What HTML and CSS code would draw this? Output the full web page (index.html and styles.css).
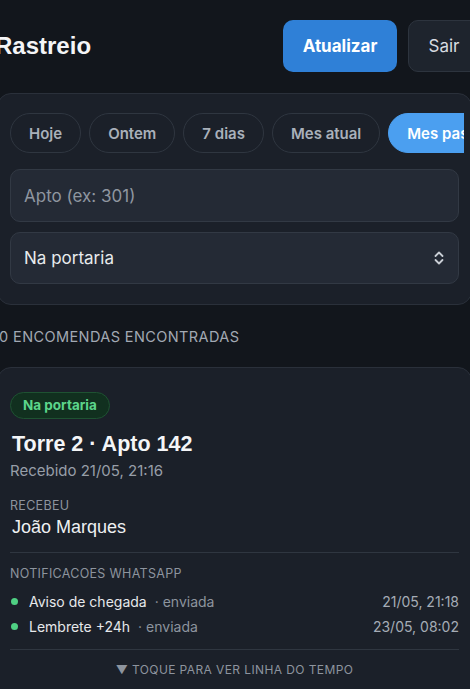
FILE: index.html
```html
<!DOCTYPE html>
<html lang="pt-BR">
<head>
    <meta charset="UTF-8">
    <meta name="viewport" content="width=device-width, initial-scale=1.0">
    <title>Rastreio</title>
    <link rel="stylesheet" href="styles.css">
</head>
<body>
    <div class="app">
        <header class="top">
            <h1>Rastreio</h1>
            <div class="actions">
                <button class="btn-primary">Atualizar</button>
                <button class="btn-ghost">Sair</button>
            </div>
        </header>

        <section class="filters">
            <div class="chips">
                <button class="chip">Hoje</button>
                <button class="chip">Ontem</button>
                <button class="chip">7 dias</button>
                <button class="chip">Mes atual</button>
                <button class="chip active">Mes passado</button>
            </div>
            <input class="field" type="text" placeholder="Apto (ex: 301)">
            <div class="select">
                <span>Na portaria</span>
                <svg width="12" height="16" viewBox="0 0 12 16" fill="none" stroke="#c9ced5" stroke-width="1.8" stroke-linecap="round" stroke-linejoin="round">
                    <path d="M2.5 6 6 2.5 9.5 6"/>
                    <path d="M2.5 10 6 13.5 9.5 10"/>
                </svg>
            </div>
        </section>

        <p class="count">0 ENCOMENDAS ENCONTRADAS</p>

        <article class="card">
            <span class="badge">Na portaria</span>
            <h2>Torre 2 · Apto 142</h2>
            <p class="muted">Recebido 21/05, 21:16</p>

            <p class="label first">RECEBEU</p>
            <p class="person">João Marques</p>

            <hr>

            <p class="label">NOTIFICACOES WHATSAPP</p>
            <ul class="notes">
                <li>
                    <span class="dot"></span>
                    <span class="name">Aviso de chegada</span>
                    <span class="state">· enviada</span>
                    <span class="when">21/05, 21:18</span>
                </li>
                <li>
                    <span class="dot"></span>
                    <span class="name">Lembrete +24h</span>
                    <span class="state">· enviada</span>
                    <span class="when">23/05, 08:02</span>
                </li>
            </ul>

            <hr class="last">

            <p class="toggle">▼ TOQUE PARA VER LINHA DO TEMPO</p>
        </article>
    </div>
</body>
</html>
```

FILE: styles.css
```css
html {
    overflow-x: hidden;
}
body {
    margin: 0;
    background-color: #12161c;
    color: #e6e8eb;
    font-family: Inter, "Noto Sans", sans-serif;
}
.app {
    margin: 0 -2px 0 -3px;
}
p {
    margin: 0;
}

/* header */
.top {
    display: flex;
    justify-content: space-between;
    align-items: center;
    padding-top: 20px;
}
.top h1 {
    margin: 0 0 0 -2px;
    font-family: "Liberation Sans", Arial, sans-serif;
    font-size: 24px;
    font-weight: bold;
    color: #f4f5f7;
}
.actions {
    display: flex;
    gap: 11px;
    margin-right: -8px;
}
.actions button {
    height: 52px;
    border-radius: 10px;
    font-family: Inter, sans-serif;
    font-size: 17px;
    cursor: pointer;
}
.btn-primary {
    width: 114px;
    background-color: #2f80d7;
    color: #fff;
    border: none;
    font-weight: 700;
}
.btn-ghost {
    width: 72px;
    background-color: #1e242d;
    color: #d7dbe0;
    border: 1px solid #2d343e;
    font-weight: 400;
}

/* filter panel */
.filters {
    margin-top: 21px;
    padding: 19px 12px 20px;
    background-color: #1b2029;
    border: 1px solid #2a303a;
    border-radius: 14px;
    display: flex;
    flex-direction: column;
}
.chips {
    display: flex;
    gap: 8px;
    overflow: hidden;
    margin-right: -5px;
}
.chip {
    flex: none;
    height: 40px;
    padding: 0 18px;
    border-radius: 20px;
    border: 1px solid #2f3640;
    background-color: transparent;
    color: #a9b0ba;
    font-family: Inter, sans-serif;
    font-size: 15px;
    font-weight: 600;
}
.chip.active {
    background-color: #4b9ff0;
    border-color: #4b9ff0;
    color: #fff;
}
.field {
    margin-top: 16px;
    height: 53px;
    box-sizing: border-box;
    padding: 0 13px;
    background-color: #242a35;
    border: 1px solid #323944;
    border-radius: 10px;
    font-family: Inter, sans-serif;
    font-size: 17px;
    color: #e6e8eb;
}
.field::placeholder {
    color: #8f96a0;
}
.select {
    margin-top: 10px;
    height: 52px;
    box-sizing: border-box;
    padding: 0 13px;
    background-color: #242a35;
    border: 1px solid #323944;
    border-radius: 10px;
    display: flex;
    justify-content: space-between;
    align-items: center;
    font-size: 17px;
    color: #e8eaed;
}

.count {
    margin: 23px 0 0 2px;
    font-size: 14.5px;
    letter-spacing: 0.4px;
    color: #a2a9b3;
}

/* card */
.card {
    margin-top: 22px;
    padding: 24px 12px 10px;
    background-color: #1b2029;
    border: 1px solid #2a303a;
    border-radius: 14px;
}
.badge {
    display: inline-block;
    padding: 5px 12px;
    line-height: 15px;
    border-radius: 14px;
    background-color: #11301f;
    border: 1px solid #1e5232;
    color: #5cd68b;
    font-size: 13.5px;
    font-weight: 700;
}
.card h2 {
    margin: 13px 0 0 2px;
    font-family: "Liberation Sans", Arial, sans-serif;
    font-size: 21.5px;
    line-height: 24px;
    font-weight: bold;
    color: #f4f5f7;
}
.muted {
    margin-top: 6px;
    font-size: 15px;
    line-height: 18px;
    color: #979ea8;
}
.label {
    font-size: 12.5px;
    line-height: 15px;
    letter-spacing: 0.3px;
    color: #8d949e;
}
.label.first {
    margin-top: 18px;
}
.person {
    margin: 4px 0 0 2px;
    font-family: "Liberation Sans", Arial, sans-serif;
    font-size: 18px;
    line-height: 21px;
    color: #eef0f2;
}
.card hr {
    margin: 14px 0 13px;
    border: none;
    border-top: 1px solid #2f3640;
}
.card hr.last {
    margin: 10px 0 12px;
}
.notes {
    list-style: none;
    margin: 8px 0 0;
    padding: 0;
}
.notes li {
    display: flex;
    align-items: center;
    height: 25px;
    font-size: 14px;
}
.dot {
    width: 7px;
    height: 7px;
    border-radius: 50%;
    background-color: #4fd083;
    margin: 0 11px 0 1px;
}
.name {
    color: #e6e8eb;
}
.state {
    margin-left: 8px;
    color: #8d949e;
}
.when {
    margin-left: auto;
    color: #a5acb6;
}
.toggle {
    text-align: center;
    font-size: 12px;
    line-height: 15px;
    letter-spacing: 0.4px;
    color: #8d949e;
    padding-bottom: 10px;
}
```
